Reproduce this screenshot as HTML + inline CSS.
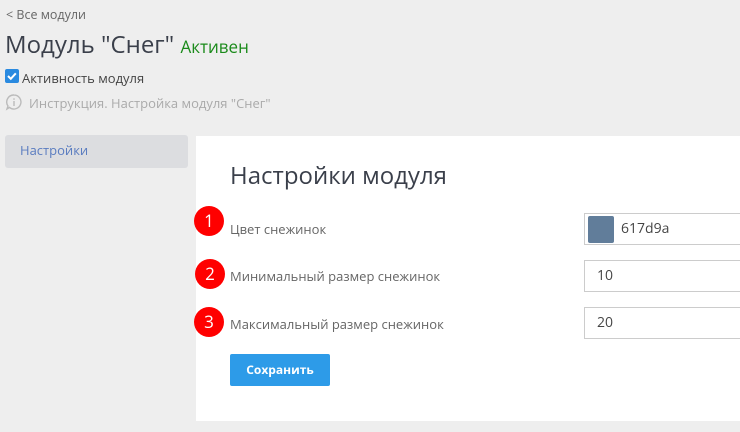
<!DOCTYPE html>
<html><head><meta charset="utf-8"><style>
*{margin:0;padding:0;box-sizing:border-box}
body{width:740px;height:432px;overflow:hidden;background:#eeeeee;font-family:"Open Sans","Liberation Sans","DejaVu Sans",sans-serif;color:#555;position:relative}
.a{position:absolute;white-space:nowrap}
.badge{position:absolute;width:30px;height:30px;border-radius:50%;background:#f00;color:#fff;font-size:17px;text-align:center;line-height:29px}
.inp{position:absolute;left:584px;width:170px;height:32px;border:1px solid #ccc;background:#fff;font-size:14px;color:#444;line-height:30px}
.lbl{font-size:13px;color:#666}
</style></head><body>
<div class="a" style="left:6px;top:6px;font-size:12.5px;color:#666">&lt; Все модули</div>
<div class="a" style="left:5px;top:28px;font-size:24px;color:#3a3f4a">Модуль "Снег" <span style="font-size:17px;color:#1a8a1a">Активен</span></div>
<svg class="a" style="left:5px;top:69px" width="14" height="14" viewBox="0 0 14 14"><rect width="14" height="14" rx="2" fill="#2a8ae0"/><path d="M3 7l2.8 2.8 5-5.5" stroke="#fff" stroke-width="2" fill="none"/></svg>
<div class="a" style="left:22px;top:69px;font-size:13px;color:#444">Активность модуля</div>
<svg class="a" style="left:5px;top:93px" width="18" height="18" viewBox="0 0 18 18"><path d="M9 2a7 7 0 1 1-4.5 12.4L2 16l1-3A7 7 0 0 1 9 2z" stroke="#bbb" stroke-width="1.4" fill="none"/><rect x="8.3" y="8" width="1.4" height="5" fill="#bbb"/><rect x="8.3" y="5.3" width="1.4" height="1.5" fill="#bbb"/></svg>
<div class="a" style="left:29px;top:94px;font-size:13px;color:#aaa">Инструкция. Настройка модуля "Снег"</div>
<div class="a" style="left:5px;top:135px;width:183px;height:33px;background:#dcdde0;border-radius:3px"></div>
<div class="a" style="left:20px;top:141px;font-size:13px;color:#5a7cc0">Настройки</div>
<div class="a" style="left:196px;top:136px;width:544px;height:285px;background:#fff"></div>
<div class="a" style="left:230px;top:159px;font-size:24px;color:#3a3f4a">Настройки модуля</div>
<div class="badge" style="left:194px;top:206px">1</div>
<div class="badge" style="left:195px;top:259px">2</div>
<div class="badge" style="left:194px;top:307px">3</div>
<div class="a lbl" style="left:230px;top:220px">Цвет снежинок</div>
<div class="a lbl" style="left:230px;top:267px">Минимальный размер снежинок</div>
<div class="a lbl" style="left:230px;top:315px">Максимальный размер снежинок</div>
<div class="inp" style="top:213px"><div class="a" style="left:3px;top:2px;width:26px;height:27px;background:#617d9a;border-radius:2px"></div><span class="a" style="left:36px;top:0">617d9a</span></div>
<div class="inp" style="top:260px;padding-left:12px">10</div>
<div class="inp" style="top:307px;padding-left:12px">20</div>
<div class="a" style="left:230px;top:354px;width:100px;height:32px;background:#2d9be8;border-radius:2px;color:#fff;font-size:12px;font-weight:bold;text-align:center;line-height:31px">Сохранить</div>
</body></html>
